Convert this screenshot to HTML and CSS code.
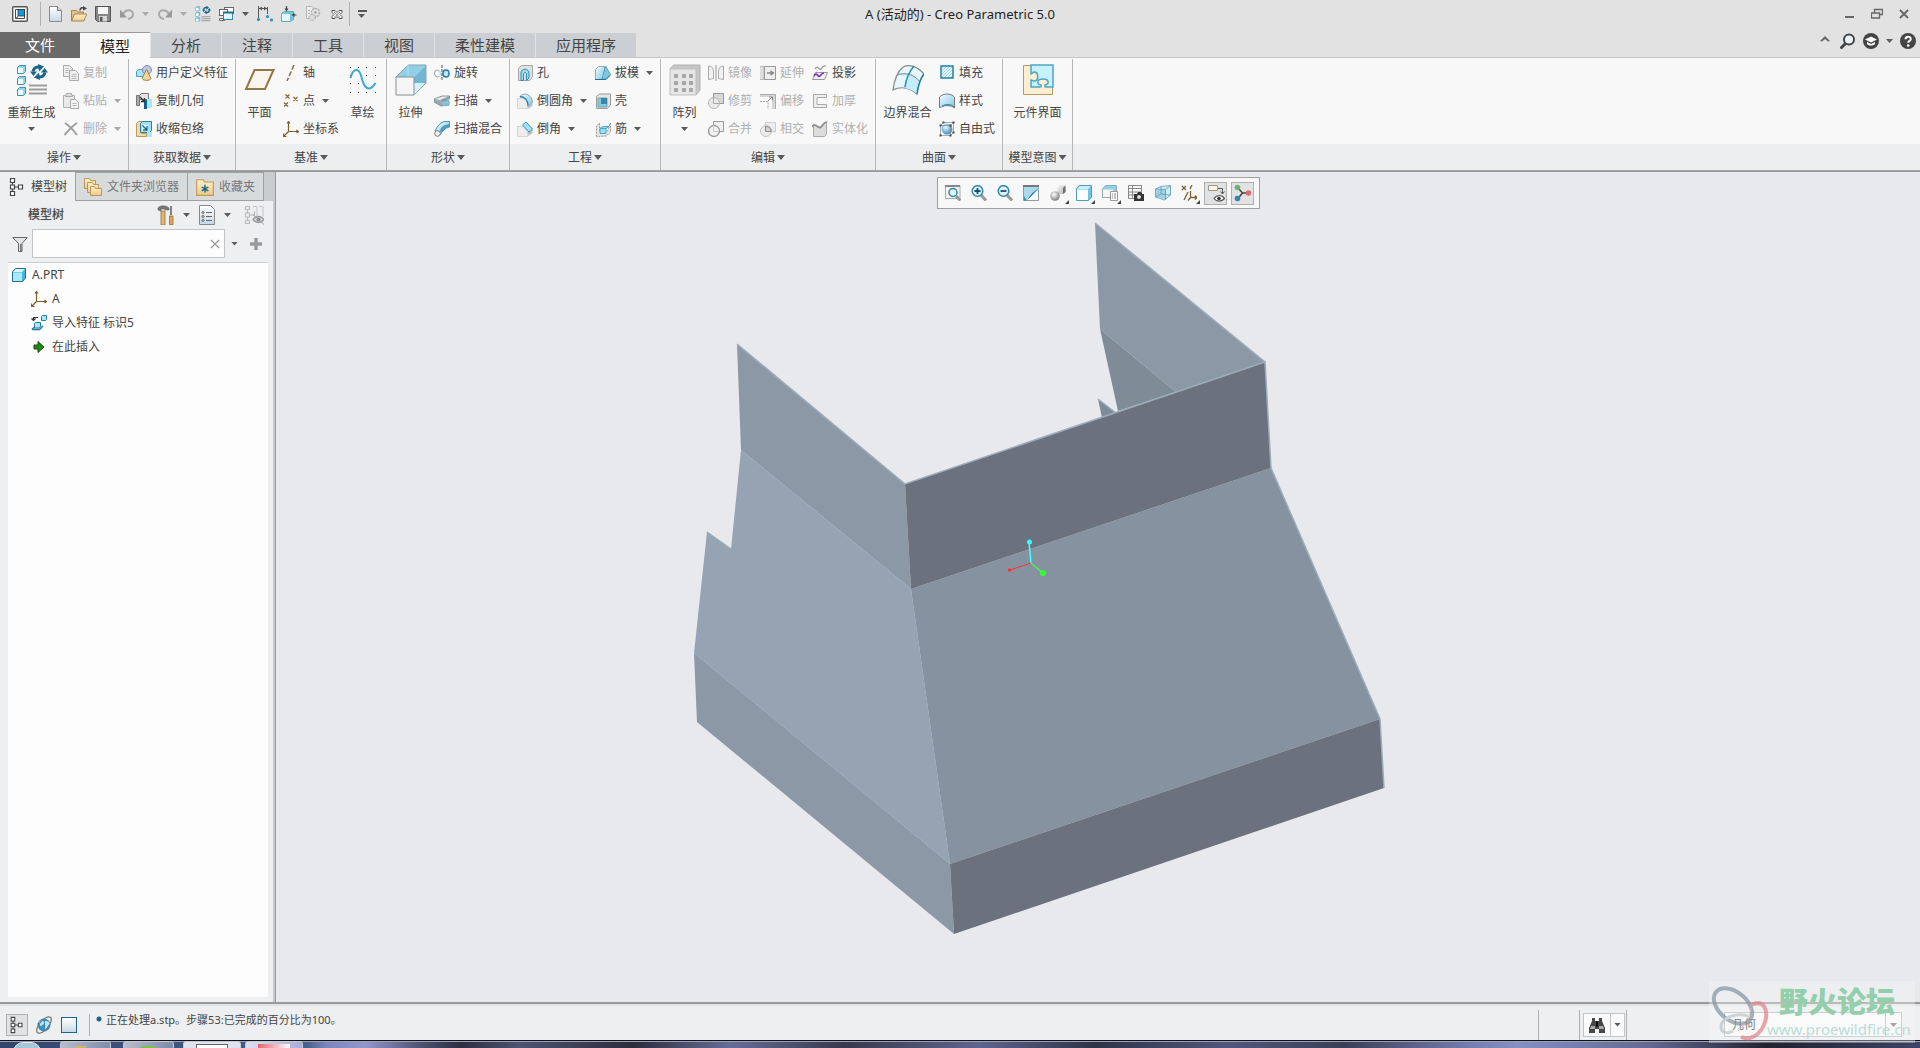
FILE: index.html
```html
<!DOCTYPE html>
<html lang="zh-CN">
<head>
<meta charset="utf-8">
<title>A (活动的) - Creo Parametric 5.0</title>
<link rel="stylesheet" href="styles.css">
</head>
<body>
<svg class="sprite" width="0" height="0" aria-hidden="true">
  <defs>
    <linearGradient id="g-ice" x1="0" y1="0" x2="1" y2="1"><stop offset="0" stop-color="#f4fcff"/><stop offset="1" stop-color="#7fc9e6"/></linearGradient>
    <linearGradient id="g-page" x1="0" y1="0" x2="0" y2="1"><stop offset="0" stop-color="#fff"/><stop offset="1" stop-color="#c5d9e4"/></linearGradient>
    <linearGradient id="g-gold" x1="0" y1="0" x2="0" y2="1"><stop offset="0" stop-color="#fff0cf"/><stop offset="1" stop-color="#ecc98b"/></linearGradient>
    <linearGradient id="g-grey" x1="0" y1="0" x2="1" y2="1"><stop offset="0" stop-color="#f4f4f4"/><stop offset="1" stop-color="#b4b4b4"/></linearGradient>
    <radialGradient id="g-ball" cx=".4" cy=".35" r=".7"><stop offset="0" stop-color="#fff"/><stop offset="1" stop-color="#757575"/></radialGradient>
    <radialGradient id="g-bluball" cx=".4" cy=".35" r=".7"><stop offset="0" stop-color="#e6f8ff"/><stop offset="1" stop-color="#2d8ab8"/></radialGradient>
    <pattern id="p-hatch" width="3" height="3" patternUnits="userSpaceOnUse"><path d="M0 3L3 0" stroke="#8fd0e8" stroke-width=".8"/></pattern>
  </defs>
  <symbol id="i-app" viewBox="0 0 16 16"><rect x=".7" y=".7" width="14.6" height="14.6" rx="1" fill="#fff" stroke="#555" stroke-width="1.4"/><path d="M3.500 3.500h9v9h-9z" fill="#fff" stroke="#4a4a4a"/><path d="M3.500 12.500l2.500-2" stroke="#4a4a4a"/><rect x="6" y="3.500" width="6.500" height="6.500" fill="#0a9be0" stroke="#333" stroke-width=".8"/></symbol>
  <symbol id="i-new" viewBox="0 0 16 16"><path d="M2.500 .5h8l4 4v11h-12z" fill="url(#g-page)" stroke="#8a8a8a"/><path d="M10.500 .5v4h4" fill="#ddd" stroke="#777"/></symbol>
  <symbol id="i-open" viewBox="0 0 16 16"><path d="M.5 15V4.500h5l1 1.500h6v4" fill="#e9c384" stroke="#a8824a"/><path d="M.5 15l3-7h12.300l-3 7z" fill="url(#g-gold)" stroke="#a8824a"/><path d="M9 4.500c0-3 2-3 4-2.500" fill="none" stroke="#444" stroke-width="1.500"/><path d="M12 0l4 2.500-4 2z" fill="#444"/></symbol>
  <symbol id="i-save" viewBox="0 0 16 16"><path d="M.5 .5h15v15H2.500l-2-2z" fill="#868686" stroke="#555"/><rect x="3" y="1" width="10" height="7" fill="#f5f5f5"/><rect x="4" y="10" width="8" height="5.500" fill="#d5d5d5"/><rect x="5" y="11" width="2.500" height="4.500" fill="#555"/></symbol>
  <symbol id="i-undo" viewBox="0 0 16 16"><path d="M4 8.500C6 3 14 3 14 8c0 3-2.500 4.500-5 5" fill="none" stroke="#a9a9a9" stroke-width="2"/><path d="M1 3.500v8h7z" fill="#9a9a9a"/></symbol>
  <symbol id="i-redo" viewBox="0 0 16 16"><path d="M12 8.500C10 3 2 3 2 8c0 3 2.500 4.500 5 5" fill="none" stroke="#a9a9a9" stroke-width="2"/><path d="M15 3.500v8H8z" fill="#9a9a9a"/></symbol>
  <symbol id="i-regen" viewBox="0 0 32 32"><g fill="#8fd6ef" stroke="#3f8fb3"><path d="M1.500 3.500l2-2h6v6l-2 2h-6z"/><path d="M1.500 14.500l2-2h6v6l-2 2h-6z"/><path d="M1.500 25.500l2-2h6v6l-2 2h-6z"/></g><g fill="#f3fcff"><path d="M2 4h5v5H2zM2 15h5v5H2zM2 26h5v5H2z"/></g><path d="M13 21.500h18M13 25.500h18M13 29.500h18" stroke="#9b9b9b" stroke-width="2"/><path d="M17 7.500c1-4.500 5-5.500 8-3.500M29 8.500c-1 4.500-5 5.500-8 3.500" fill="none" stroke="#1a648a" stroke-width="3"/><path d="M22 0l6 2.500-5 5zM24 16l-6-2.500 5-5zM14 7.500h7l-3.500 4.500zM32 8.500h-7l3.500-4.500z" fill="#1a648a"/></symbol>
  <symbol id="i-windows" viewBox="0 0 16 16"><g fill="#fff" stroke="#666"><rect x="5.500" y="1.500" width="9" height="6"/><rect x=".5" y="3.500" width="8" height="6"/><path d="M.5 12.500h5v2h-5z"/></g><rect x="4.500" y="6.500" width="9" height="7" fill="#e4f5fb" stroke="#2f8aae"/><path d="M4 6.500h10" stroke="#1f6f92" stroke-width="2"/></symbol>
  <symbol id="i-dims" viewBox="0 0 16 16"><path d="M1.500 0v12M10.500 1v7M1 2.500h9.500" fill="none" stroke="#555"/><path d="M2 2.500l3-2v4zM10 2.500l-3-2v4z" fill="#555"/><g fill="#2f93bf"><circle cx="1.500" cy="13.500" r="1.600"/><circle cx="10.500" cy="10.500" r="1.600"/><circle cx="14.500" cy="14" r="1.600"/></g></symbol>
  <symbol id="i-annot" viewBox="0 0 16 16"><path d="M.5 7.500l3-2h9v8l-3 2h-9z" fill="#6fc6e2" stroke="#5da9c6"/><path d="M1 8h8v7H1z" fill="#e5f8fe"/><path d="M5.500 0v4M15.500 9h-3" stroke="#444" stroke-width="1.200"/><path d="M3.500 2.500h4l-2 3zM13.500 7v4l-3-2z" fill="#444"/></symbol>
  <symbol id="i-gear" viewBox="0 0 16 16"><path d="M1.500 .5h6l3 3v9h-9z" fill="#eee" stroke="#b5b5b5"/><circle cx="10.500" cy="6.500" r="4" fill="#e5e5e5" stroke="#aaa" stroke-width="1.500" stroke-dasharray="2 1"/><circle cx="7" cy="11.500" r="3" fill="#ddd" stroke="#aaa" stroke-dasharray="2 1"/><path d="M3 4.500h2M3 7.500h2" stroke="#aaa"/><circle cx="10.500" cy="6.500" r="1.200" fill="#999"/></symbol>
  <symbol id="i-closewin" viewBox="0 0 16 16"><path d="M3 4.500h3l2 2 2-2h3v2l-2 2 2 2v2h-3l-2-2-2 2H3v-2l2-2-2-2z" fill="#fff" stroke="#555"/><path d="M5 6l6 5.500M11 6l-6 5.500" stroke="#666" stroke-width=".8"/></symbol>
  <symbol id="i-copy" viewBox="0 0 16 16"><g fill="#eee" stroke="#aaa"><path d="M.5 .5h6l3 3v8h-9z"/><path d="M6.500 5.500h6l3 3v7h-9z"/></g><path d="M2.500 3.500h3M2.500 5.500h3M2.500 7.500h3M8.500 9.500h5M8.500 11.500h5M8.500 13.500h5" stroke="#b8b8b8"/></symbol>
  <symbol id="i-paste" viewBox="0 0 16 16"><path d="M.5 2.500h11v12H.5z" fill="#e9e9e9" stroke="#b0b0b0"/><path d="M3.500 .5h5l1 3h-7z" fill="#ddd" stroke="#aaa"/><path d="M7.500 6.500h5l3 3v6h-8z" fill="#f4f4f4" stroke="#aaa"/><path d="M9.500 10.500h4M9.500 12.500h4" stroke="#b8b8b8"/></symbol>
  <symbol id="i-delete" viewBox="0 0 16 16"><path d="M2 2c5 3 9 8 12 12M14 2C9 5 5 10 1.500 14" fill="none" stroke="#9c9c9c" stroke-width="2"/></symbol>
  <symbol id="i-udf" viewBox="0 0 16 16"><path d="M.5 6.500l2-2h8v7H.5z" fill="#a9e3f7" stroke="#4a9fc0"/><circle cx="11" cy="5" r="4.500" fill="#b8c7e4" stroke="#7f8fb5"/><path d="M10.500 4.500l4.500 9c-1 2.500-7.500 2.500-9 0z" fill="#f1d49e" stroke="#a67d3c"/></symbol>
  <symbol id="i-copygeom" viewBox="0 0 16 16"><path d="M.5 2.500h3v10h-3z" fill="#aaa" stroke="#777"/><path d="M3.500 2.500l2-2h7v6h-9z" fill="#e5e5e5" stroke="#777"/><path d="M10 6h6v9h-6z" fill="#a8e6fb"/><path d="M8 8l3-2v10H8z" fill="#12618a"/><path d="M4 4l4 4M8.500 5v3.500H5" fill="none" stroke="#333" stroke-width="1.300"/></symbol>
  <symbol id="i-shrink" viewBox="0 0 16 16"><path d="M.5 2.500l2-2h5v4h-2v8h5v3H.5z" fill="#f3dba9" stroke="#c09a56"/><path d="M4.500 2.500l2-2h9v9l-2 2h-9z" fill="#a6e0f5" stroke="#2a7ea5"/><path d="M6 4h6v6H6z" fill="#e3f7fd"/><path d="M6.500 4.500l4 4M11 5v4H7" fill="none" stroke="#1a648a" stroke-width="1.300"/><path d="M11 11h5v5h-5z" fill="#a8e6fb"/></symbol>
  <symbol id="i-plane" viewBox="0 0 32 32"><path d="M10.500 6h19l-8.500 19h-19z" fill="#f9f5ec" stroke="#927644" stroke-width="2"/></symbol>
  <symbol id="i-axis" viewBox="0 0 16 16"><path d="M11 0L4 16" stroke="#8a6b3a" stroke-width="1.500" stroke-dasharray="5 2"/></symbol>
  <symbol id="i-point" viewBox="0 0 16 16"><path d="M2.500 1.500l4 4M6.500 1.500l-4 4M10.500 4l4 4M14.500 4l-4 4M1 9.500l4 4M5 9.500l-4 4" stroke="#8a6b3a" stroke-width="1.300"/></symbol>
  <symbol id="i-csys" viewBox="0 0 16 16"><path d="M5.500 0v10.500H16M5.500 10.500L1 15M4 2.500L5.500 .5 7 2.500M13.500 9l2 1.500-2 1.500M.5 12.500v3h3" fill="none" stroke="#7c6030" stroke-width="1.200"/></symbol>
  <symbol id="i-sketch" viewBox="0 0 32 32"><g fill="#444"><path d="M3 3h1v1H3zM11 3h1v1h-1zM19 3h1v1h-1zM28 3h1v1h-1zM3 11h1v1H3zM28 11h1v1h-1zM3 19h1v1H3zM11 19h1v1h-1zM28 19h1v1h-1zM3 28h1v1H3zM11 28h1v1h-1zM19 28h1v1h-1zM28 28h1v1h-1zM19 11h1v1h-1z"/></g><path d="M3.500 14C6 4 12 3 14.500 13c3 14 9 14 14 6" fill="none" stroke="#35a9d8" stroke-width="2"/></symbol>
  <symbol id="i-extrude" viewBox="0 0 32 32"><path d="M1 13L13 1h18L19 13z" fill="#8fcfe8"/><path d="M31 1v18L19 31V13z" fill="#d6f4fd"/><path d="M19 13L31 1v18H19z" fill="#73b6d2"/><path d="M1 13L13 1h18v18L19 31" fill="none" stroke="#8aa7b2"/><path d="M13 1v12h6" fill="none" stroke="#b9e2f1"/><path d="M1 13h18v18H1z" fill="#f5f5f5" stroke="#8c8c8c"/></symbol>
  <symbol id="i-revolve" viewBox="0 0 16 16"><ellipse cx="3.500" cy="8.500" rx="3" ry="3.500" fill="#fff" stroke="#999"/><path d="M4 5.500h8v6H4z" fill="#d4edf6" opacity=".7"/><ellipse cx="12" cy="8.500" rx="3" ry="3.500" fill="#b9e6f5" stroke="#287da2" stroke-width="1.500"/><path d="M8 0v16" stroke="#555" stroke-dasharray="3 1"/></symbol>
  <symbol id="i-sweep" viewBox="0 0 16 16"><path d="M0 6l8-3h7.500v3L8 7l7 1v4l-8 1-7-4z" fill="#9aaab2" stroke="#76868e" stroke-width=".8"/><path d="M1 6l8-2.500h5L6 7z" fill="#e9edef"/><path d="M8 9l7.500-2v4L9 13z" fill="#7cc5e0"/></symbol>
  <symbol id="i-blend" viewBox="0 0 16 16"><path d="M1 10C4 4 7 1 11 .5h4.500V6C11 7 8 10 6 14z" fill="url(#g-ice)" stroke="#3f93b5"/><path d="M6 9c2-4 4-5 9-6v3c-4 1-6 3-8 7z" fill="#4e9dbc"/><circle cx="3.500" cy="12.500" r="2.800" fill="#f4f4f4" stroke="#777"/></symbol>
  <symbol id="i-hole" viewBox="0 0 16 16"><path d="M1.500 3.500l3-3h11v11l-3 4h-11z" fill="#e0e0e0" stroke="#a5a5a5"/><path d="M4 15.500V8c0-5 8-5 8 0v5l-2.500 2.500V9c0-2-3-2-3 0v6.500z" fill="#9edcf1" stroke="#2d8db4"/></symbol>
  <symbol id="i-round" viewBox="0 0 16 16"><path d="M.5 5.500h4c4 0 6 3 6 6v4H.5z" fill="#ededed" stroke="#d5d5d5"/><path d="M10.500 12l5-3v4l-4 3z" fill="#c5c5c5"/><path d="M3 3.500C6-1 15 1 15.500 9l-4.500 4.500C11 7 7 4 3 4z" fill="url(#g-ice)" stroke="#8aa"/><path d="M3 3.500c5 0 8 4 8 9" fill="none" stroke="#2589b3" stroke-width="1.300"/></symbol>
  <symbol id="i-chamfer" viewBox="0 0 16 16"><path d="M.5 5.500h5l5 5v5H.5z" fill="#ededed" stroke="#d5d5d5"/><path d="M10.500 11l5-3v4l-4 3z" fill="#bdbdbd"/><path d="M5.500 4l3.500-3 6.500 7-3.500 3z" fill="#9ee2f8" stroke="#4196b7"/></symbol>
  <symbol id="i-draft" viewBox="0 0 16 16"><path d="M.5 4.500l3-3h6v9l-3 4h-6z" fill="url(#g-ice)" stroke="#a5a5a5"/><path d="M7 14L10.500 1l5 8.500L11 14z" fill="#7cc8e2" stroke="#5d9fb8"/><path d="M0 14.500h11l4-4" fill="none" stroke="#1f6f92"/></symbol>
  <symbol id="i-shell" viewBox="0 0 16 16"><path d="M1.500 3.500l3-2.500h11v11l-3 3.500h-11z" fill="#e6e6e6" stroke="#999"/><path d="M3 5h9v9H3z" fill="#8cc8dd" stroke="#6ba3b9"/><path d="M6 5h6v6H6z" fill="#3c86a5"/></symbol>
  <symbol id="i-rib" viewBox="0 0 16 16"><path d="M1.500 15.500V5l3-3v8h8l3-8v9l-4 4z" fill="#e6e6e6" stroke="#999" stroke-dasharray="2 1"/><path d="M5 7.500h6v5H5zM5 7.500l3-2h6l-3 2z" fill="#94e0f6" stroke="#4ba6c6"/></symbol>
  <symbol id="i-pattern" viewBox="0 0 32 32"><path d="M1 4.500L5 1h26v25l-4 5z" fill="#c6c6c6" stroke="#b0b0b0"/><path d="M1 5h26v26H1z" fill="#e6e6e6" stroke="#c0c0c0"/><path d="M5 10h4v4H5zM13 10h4v4h-4zM20 10h4v4h-4zM5 17h4v4H5zM13 17h4v4h-4zM20 17h4v4h-4zM5 24h4v4H5zM13 24h4v4h-4zM20 24h4v4h-4z" fill="#a8a8a8"/></symbol>
  <symbol id="i-mirror" viewBox="0 0 16 16"><path d="M.5 1c4 0 5 3 5 6v6.500l-5 1zM15.500 1c-4 0-5 3-5 6v6.500l5 1z" fill="#f2f2f2" stroke="#aaa"/><path d="M8 0v16" stroke="#999"/></symbol>
  <symbol id="i-trim" viewBox="0 0 16 16"><rect x="5.500" y=".5" width="10" height="10" fill="#d8d8d8" stroke="#999"/><circle cx="6" cy="10" r="5.500" fill="#e9e9e9" stroke="#b5b5b5"/><path d="M5.500 4.500v6H11" fill="none" stroke="#aaa"/></symbol>
  <symbol id="i-merge" viewBox="0 0 16 16"><path d="M5.500 4.500v-4h10v10h-4.500" fill="#f1f1f1" stroke="#999"/><circle cx="6" cy="10" r="5.500" fill="#f1f1f1" stroke="#999" stroke-width="1.300"/><path d="M5.500 4.500v6H11" fill="none" stroke="#ccc"/></symbol>
  <symbol id="i-extend" viewBox="0 0 16 16"><path d="M0 1.500h4v13H0" fill="#ddd" stroke="#bbb"/><path d="M4.500 1.500h11v13h-11z" fill="#eee" stroke="#999"/><path d="M7 8h5" stroke="#888" stroke-width="1.500"/><path d="M10.500 5l4 3-4 3z" fill="#888"/></symbol>
  <symbol id="i-offset" viewBox="0 0 16 16"><path d="M0 1.500h15.500V16" fill="none" stroke="#aaa"/><path d="M0 4h12v12h3V2H0z" fill="#d5d5d5"/><path d="M0 8.500h8V16" fill="none" stroke="#aaa" stroke-dasharray="2 1"/><path d="M8 8l4-4M9 4h3.500v3.500" stroke="#888" fill="none"/></symbol>
  <symbol id="i-intersect" viewBox="0 0 16 16"><rect x="5.500" y="1.500" width="10" height="9" fill="#ececec" stroke="#ccc"/><circle cx="6" cy="10" r="5.500" fill="#ececec" stroke="#c2c2c2"/><path d="M5.500 5.500c4 0 5.500 2 5.500 5H5.500z" fill="#d4d4d4" stroke="#888"/></symbol>
  <symbol id="i-project" viewBox="0 0 16 16"><path d="M3 4c3-5 4 2 6 0s2-4 5-3" fill="none" stroke="#999" stroke-width="1.300"/><path d="M.5 14.500l3-7h12l-3 7z" fill="#f1f1f1" stroke="#999"/><path d="M2 11c3-5 4 2 6 0s2-3 4-3" fill="none" stroke="#7a35b8" stroke-width="1.700"/></symbol>
  <symbol id="i-thicken" viewBox="0 0 16 16"><path d="M14.500 1.500H1.500v13h13v-3h-9.500v-7h9.500z" fill="#eee" stroke="#aaa"/></symbol>
  <symbol id="i-solidify" viewBox="0 0 16 16"><path d="M1.500 15.500V6c3-5 5 3 8 0s2-5 5-5V13l-2 2.500z" fill="#dcdcdc" stroke="#aaa"/><path d="M0 6c3-6 6 3 9 0s2-4 6-5" fill="none" stroke="#909090" stroke-width="1.800"/></symbol>
  <symbol id="i-boundary" viewBox="0 0 32 32"><path d="M11 3C17 0 25 2 32 10c-4 5-6 12-7 20C18 24 9 22 1 26 2 18 5 8 11 3z" fill="#e6f8fd" stroke="#8a8a8a" stroke-width="1.300"/><path d="M4 11c8-4 17-1 24 6l-3 13c-3-3-7-5-12-6 1-5 2-8 4-12z" fill="#c3edfa"/><path d="M5 11c8-3 17-1 23 7" fill="none" stroke="#888"/><path d="M22 2c-5 6-8 13-9 21" fill="none" stroke="#2d8db4" stroke-width="1.500"/><path d="M32 10c-4 5-6 12-7 20" fill="none" stroke="#247ca2" stroke-width="1.500"/></symbol>
  <symbol id="i-fill" viewBox="0 0 16 16"><path d="M2 1h12v12H2z" fill="#dff5fc"/><path d="M2 1h12v12H2z" fill="url(#p-hatch)" stroke="#2480a6" stroke-width="1.500"/></symbol>
  <symbol id="i-style" viewBox="0 0 16 16"><path d="M.5 4c4-4 11-4 15 0v11c-3-3-10-3-13-1C2 14 1 14 .5 15z" fill="url(#g-ice)" stroke="#777"/><path d="M3 13c4-2 9-2 12 1" fill="none" stroke="#247ca2"/></symbol>
  <symbol id="i-freeform" viewBox="0 0 16 16"><circle cx="8" cy="8" r="5.500" fill="url(#g-bluball)"/><path d="M1.500 4.500h10v10h-10zM4.500 1.500h10v10M1.500 4.500l3-3M11.500 4.500l3-3M11.500 14.500l3-3" fill="none" stroke="#777" stroke-width=".6"/><path d="M.5 3.500h2v2h-2zM10.500 3.500h2v2h-2zM.5 13.500h2v2h-2zM10.500 13.500h2v2h-2zM3.500 .5h2v2h-2zM13.500 .5h2v2h-2zM13.500 10.500h2v2h-2z" fill="#444"/></symbol>
  <symbol id="i-interface" viewBox="0 0 32 32"><path d="M1.500 1.500h29v29h-29z" fill="#ffeed2" stroke="#b8995e"/><path d="M9 1h22v22h-7c-2 0-1-1-1-2 5-1 4-6-2-6s-7 5-2 6c0 1 1 2-1 2H9v-7c2 0 1 1 3 1 5 0 5-9 0-9-2 0-1 2-3 2z" fill="#c9f1fc" stroke="#4ba6c6" stroke-width="1.500"/></symbol>
  <symbol id="i-tree" viewBox="0 0 16 20"><path d="M1.500 1.500h4v4h-4zM1.500 8h4v4h-4zM1.500 14.500h4v4h-4zM9.500 8h4v4h-4zM3.500 5.500V8M3.500 12v2.500M5.500 10h4" fill="#fff" stroke="#444" stroke-width="1.200"/></symbol>
  <symbol id="i-folders" viewBox="0 0 20 20"><g fill="url(#g-gold)" stroke="#bb9656"><path d="M1.500 1.500h5l1 2h5v8h-11z"/><path d="M4.500 5.500h5l1 2h5v8h-11z"/><path d="M7.500 9.500h4l1 2h6v7h-11z"/></g></symbol>
  <symbol id="i-fav" viewBox="0 0 18 18"><path d="M1.500 2.500h6l1 2h8v12h-15z" fill="url(#g-gold)" stroke="#c09a56"/><path d="M9 7v7M6 9l6 3.500M12 9l-6 3.500" stroke="#176286" stroke-width="1.300"/></symbol>
  <symbol id="i-hammer" viewBox="0 0 18 20"><path d="M1 3c2-3 8-3 11 0v2H8V4H4v2L1 5z" fill="#777" stroke="#555" stroke-width=".5"/><path d="M4 6h4v14H4z" fill="#dfb778" stroke="#946c34" stroke-width=".8"/><path d="M14 1v9" stroke="#777" stroke-width="1.800"/><path d="M12.500 11h3.500v8.500h-3.500z" fill="#dfa762" stroke="#946c34" stroke-width=".8"/></symbol>
  <symbol id="i-list" viewBox="0 0 16 20"><path d="M.5 .5h11l4 4v15H.5z" fill="url(#g-page)" stroke="#888"/><path d="M7 7.500h6M7 11.500h6M7 15.500h6" stroke="#666"/><g fill="#fff" stroke="#555"><circle cx="4" cy="7.500" r="1"/><circle cx="4" cy="11.500" r="1"/><circle cx="4" cy="15.500" r="1"/></g></symbol>
  <symbol id="i-treeoff" viewBox="0 0 20 20"><path d="M1.500 1.500h4v3h-4zM1.500 8h4v4h-4zM1.500 15.500h4v3h-4zM3.500 5v3M3.500 12v3.500M5.500 10h5V6" fill="none" stroke="#bbb" stroke-width="1.200"/><path d="M9 1.500h4v10M15 1.500h4v10" fill="none" stroke="#c5c5c5"/><path d="M9 14.500c3-4 8-4 11 0-3 4-8 4-11 0z" fill="#ddd" stroke="#999" stroke-width="1.300"/><circle cx="14.500" cy="14.500" r="2" fill="#888"/><path d="M9 9.500l11 10" stroke="#999"/></symbol>
  <symbol id="i-funnel" viewBox="0 0 16 16"><path d="M.7 1.500h14.600L10 7.500v8H6.500v-8z" fill="#e4e4e4" stroke="#666"/><path d="M8 8h1.500v7H8z" fill="#777"/></symbol>
  <symbol id="i-part" viewBox="0 0 14 14"><path d="M.5 4l3-3.500h10V10l-3 3.500H.5z" fill="#45b5de" stroke="#1f6f92"/><path d="M1 4.500h9V13H1z" fill="#a8e8fc"/><path d="M1 4l3-3h9l-3 3z" fill="#d8f6ff"/></symbol>
  <symbol id="i-import" viewBox="0 0 16 16"><path d="M10.500 1.500l1-1h4v4l-1 1h-4z" fill="#a8e6fb" stroke="#247ca2"/><path d="M3.500 8.500l1-1h5v4l-1 1.500h-5z" fill="#a8e6fb" stroke="#247ca2"/><path d="M1 14.500h7.500l3.500-3.500M1 14.500l2-2" fill="none" stroke="#247ca2" stroke-width="1.500"/><path d="M2.500 5V2.500H7M.5 3.500l2 2 2-2" fill="none" stroke="#333" stroke-width="1.200"/></symbol>
  <symbol id="i-insert" viewBox="0 0 16 16"><path d="M3 6h4V2.500L13 8l-6 5.500V10H3z" fill="#1b8d0e" stroke="#23421c"/></symbol>
  <symbol id="i-refit" viewBox="0 0 16 16"><path d="M.5 .5h14.500v13H.5z" fill="#f3f3f3" stroke="#aaa"/><path d="M0 1h15" stroke="#888" stroke-width="2"/><path d="M11 11l4.500 4.500" stroke="#999" stroke-width="3"/><circle cx="8" cy="7.500" r="4" fill="#e3f6fd" stroke="#2c87ae" stroke-width="1.500"/></symbol>
  <symbol id="i-zoomin" viewBox="0 0 16 16"><path d="M9.500 9.500l5.500 6" stroke="#999" stroke-width="3"/><circle cx="6.500" cy="6" r="5.300" fill="#e3f6fd" stroke="#2c87ae" stroke-width="1.500"/><path d="M3.500 6h6M6.500 3v6" stroke="#164f6e" stroke-width="1.800"/></symbol>
  <symbol id="i-zoomout" viewBox="0 0 16 16"><path d="M9.500 9.500l5.500 6" stroke="#999" stroke-width="3"/><circle cx="6.500" cy="6" r="5.300" fill="#e3f6fd" stroke="#2c87ae" stroke-width="1.500"/><path d="M3.500 6h6" stroke="#164f6e" stroke-width="1.800"/></symbol>
  <symbol id="i-repaint" viewBox="0 0 16 16"><path d="M.5 .5h15v15H.5z" fill="#f5fbfd" stroke="#8a9aa2"/><path d="M1 2h14.500v3C11 6 7 9 4 15.500L1 11z" fill="#a9d9ec"/><path d="M0 1h16" stroke="#777" stroke-width="2"/><path d="M15.500 3.500C11 6 7 10 4 15l4-3.500z" fill="#1b7298"/><path d="M1 11l3 4.500H1z" fill="#3d91b5"/></symbol>
  <symbol id="i-shading" viewBox="0 0 16 16"><path d="M7 3l3-2.500h5.500V7L13 9H7z" fill="url(#g-grey)"/><path d="M13 3v6l2.500-2V.5z" fill="#6d6d6d"/><circle cx="5" cy="11" r="4.800" fill="url(#g-ball)"/></symbol>
  <symbol id="i-display" viewBox="0 0 16 16"><path d="M.5 4l3-3.500h12V12l-3 3.500H.5z" fill="#6ec4e2" stroke="#4e9db9"/><path d="M1 4.500h11V15H1z" fill="#fbfeff"/><path d="M1 4l3-3h11l-3 3z" fill="#c7f0fc"/></symbol>
  <symbol id="i-views" viewBox="0 0 16 16"><path d="M.5 4l3-3.500h11V10l-3 2.500H.5z" fill="#8ed2ea" stroke="#98a7ae"/><path d="M1 4.500h10V12H1z" fill="#f4f4f4"/><path d="M8.500 6.500h7v9h-7z" fill="#fff" stroke="#999"/><path d="M10 9h1M12 9h2M10 11h1M12 11h2M10 13h1M12 13h2" stroke="#666" stroke-width=".8"/></symbol>
  <symbol id="i-camera" viewBox="0 0 16 16"><path d="M.5 .5h13v13H.5zM.5 3.500h13M.5 7h13M.5 10h13M4.500 .5v13" fill="#f8f8f8" stroke="#888"/><path d="M6 9h3l1-2h3l1 2h2v7H6z" fill="#333"/><circle cx="11" cy="12" r="2" fill="#ddd"/></symbol>
  <symbol id="i-persp" viewBox="0 0 16 16"><path d="M.5 4L6 1.500 15.500 .5V10l-6 5L.5 12z" fill="#d3ebf5" stroke="#6fafc9"/><path d="M.5 4l10 .5 5-4M10.500 4.500v10.500M6 1.500V9l9.500 1M6 9L.5 12" fill="none" stroke="#4f9ab8" stroke-width=".8"/><path d="M1 4.500h9V14l-9-2z" fill="#5ba7c7" opacity=".4"/></symbol>
  <symbol id="i-datum" viewBox="0 0 16 16"><path d="M1 1l4 4M5 1L1 5M11 0L9 4M7 7l-4 8M9.500 6v6.500H16M9.500 12.500l-2.500 3M14 10.500l2 2-2 2" fill="none" stroke="#7c6030" stroke-width="1.300"/></symbol>
  <symbol id="i-annotdisp" viewBox="0 0 18 18"><path d="M1.500 1.500h9v5h-9z" fill="#fff6d8" stroke="#999"/><path d="M11 4.500h4.500v5M13.500 7.500l2 2.500 2-2.500" fill="none" stroke="#555"/><path d="M7 14.500c3-4 8-4 10.500 0-3 3.500-8 3.500-10.500 0z" fill="#fff" stroke="#555" stroke-width="1.200"/><circle cx="12" cy="14.500" r="1.800" fill="#333"/></symbol>
  <symbol id="i-spin" viewBox="0 0 18 18"><path d="M4 4l4.500 5H14M8.500 9L4 14.500" fill="none" stroke="#444" stroke-width="1.500"/><circle cx="3.500" cy="3.500" r="2.800" fill="#6fae74"/><circle cx="14.500" cy="9" r="2.800" fill="#e0696c"/><circle cx="3.500" cy="14.500" r="2.800" fill="#3a82ad"/></symbol>
  <symbol id="i-globe" viewBox="0 0 18 18"><circle cx="9" cy="9" r="6.500" fill="#348fc4"/><path d="M4 6c3-3 5-1 5 1s-3 2-3 4M10 5c3 0 5 1 5 4-2 0-3 3-4 5-2-2 0-4-1-5z" fill="#bfe6f6"/><ellipse cx="9" cy="9" rx="10" ry="4.500" transform="rotate(-50 9 9)" fill="none" stroke="#777" stroke-width="1.300"/></symbol>
  <symbol id="i-binoc" viewBox="0 0 16 16"><path d="M3 1h3v3h4V1h3v3l3 7v5h-6v-4H6v4H0v-5l3-7z" fill="#484848"/><path d="M2 9h4v3H1zM10 9h4l1 3h-5z" fill="#aaa"/><path d="M7 4h2v6H7z" fill="#111"/></symbol>
  <symbol id="i-search" viewBox="0 0 16 16"><path d="M5 11l-3.500 3.500" stroke="#444" stroke-width="3" stroke-linecap="round"/><circle cx="9" cy="6.500" r="5" fill="#eef5fa" stroke="#444" stroke-width="2"/></symbol>
  <symbol id="i-learn" viewBox="0 0 16 16"><circle cx="8" cy="8" r="8" fill="#444"/><path d="M8 3.500l6 3-6 3-6-3z" fill="#fff"/><path d="M4 9v2c2 2 6 2 8 0V9l-4 2z" fill="#fff"/></symbol>
  <symbol id="i-help" viewBox="0 0 16 16"><circle cx="8" cy="8" r="8" fill="#444"/><path d="M5.500 6.300c0-3.500 5.300-3.300 5.300-.3 0 2-2.600 1.800-2.600 3.800" fill="none" stroke="#fff" stroke-width="2"/><circle cx="8.200" cy="12.500" r="1.300" fill="#fff"/></symbol>
  <symbol id="i-caret" viewBox="0 0 16 16"><path d="M3 8l5-5 5 5-2 .5-3-2.500-3 2.500z" fill="#666"/></symbol>
  <symbol id="i-min" viewBox="0 0 12 12"><path d="M1 9h9" stroke="#666" stroke-width="2"/></symbol>
  <symbol id="i-restore" viewBox="0 0 12 12"><path d="M3.500 4.500v-3h8v5h-3M.5 5h8v5h-8z" fill="none" stroke="#666" stroke-width="1.300"/></symbol>
  <symbol id="i-close" viewBox="0 0 12 12"><path d="M2 2l8 8M10 2l-8 8" stroke="#666" stroke-width="1.800"/></symbol>
</svg>

<header class="titlebar">
  <div class="quick">
    <button class="tool" aria-label="应用程序菜单"><svg><use href="#i-app"/></svg></button>
    <span class="rule"></span>
    <button class="tool" aria-label="新建"><svg><use href="#i-new"/></svg></button>
    <button class="tool" aria-label="打开"><svg><use href="#i-open"/></svg></button>
    <button class="tool" aria-label="保存"><svg><use href="#i-save"/></svg></button>
    <button class="tool" aria-label="撤消"><svg><use href="#i-undo"/></svg></button>
    <button class="drop faded" aria-label="撤消列表"></button>
    <button class="tool" aria-label="重做"><svg><use href="#i-redo"/></svg></button>
    <button class="drop faded" aria-label="重做列表"></button>
    <button class="tool" aria-label="重新生成"><svg><use href="#i-regen"/></svg></button>
    <button class="tool" aria-label="窗口"><svg><use href="#i-windows"/></svg></button>
    <button class="drop" aria-label="窗口列表"></button>
    <button class="tool" aria-label="尺寸"><svg><use href="#i-dims"/></svg></button>
    <button class="tool" aria-label="注释平面"><svg><use href="#i-annot"/></svg></button>
    <button class="tool" aria-label="设置"><svg><use href="#i-gear"/></svg></button>
    <button class="tool" aria-label="关闭"><svg><use href="#i-closewin"/></svg></button>
    <span class="rule snug"></span>
    <button class="drop lined" aria-label="自定义快速访问工具栏"></button>
  </div>
  <h1 class="title">A (活动的) - Creo Parametric 5.0</h1>
  <div class="window-buttons">
    <button aria-label="最小化"><svg><use href="#i-min"/></svg></button>
    <button aria-label="还原"><svg><use href="#i-restore"/></svg></button>
    <button aria-label="关闭窗口"><svg><use href="#i-close"/></svg></button>
  </div>
</header>

<nav class="tabs">
  <button class="tab file">文件</button>
  <button class="tab active">模型</button>
  <button class="tab">分析</button>
  <button class="tab">注释</button>
  <button class="tab">工具</button>
  <button class="tab">视图</button>
  <button class="tab">柔性建模</button>
  <button class="tab">应用程序</button>
  <div class="help">
    <button class="tool" aria-label="收起功能区"><svg><use href="#i-caret"/></svg></button>
    <button class="tool" aria-label="搜索"><svg><use href="#i-search"/></svg></button>
    <button class="tool" aria-label="学习"><svg><use href="#i-learn"/></svg></button>
    <button class="drop" aria-label="学习列表"></button>
    <button class="tool" aria-label="帮助"><svg><use href="#i-help"/></svg></button>
  </div>
</nav>

<section class="ribbon">
  <div class="group">
    <div class="body">
      <button class="big wide"><svg><use href="#i-regen"/></svg><span>重新生成</span><i class="arrow"></i></button>
      <div class="col c-first">
        <button class="cmd" disabled><svg><use href="#i-copy"/></svg>复制</button>
        <button class="cmd" disabled><svg><use href="#i-paste"/></svg>粘贴<i class="arrow"></i></button>
        <button class="cmd" disabled><svg><use href="#i-delete"/></svg>删除<i class="arrow"></i></button>
      </div>
    </div>
    <button class="caption">操作<i class="arrow"></i></button>
  </div>
  <div class="group">
    <div class="body lead">
      <div class="col c-data">
        <button class="cmd"><svg><use href="#i-udf"/></svg>用户定义特征</button>
        <button class="cmd"><svg><use href="#i-copygeom"/></svg>复制几何</button>
        <button class="cmd"><svg><use href="#i-shrink"/></svg>收缩包络</button>
      </div>
    </div>
    <button class="caption">获取数据<i class="arrow"></i></button>
  </div>
  <div class="group">
    <div class="body">
      <button class="big"><svg><use href="#i-plane"/></svg><span>平面</span></button>
      <div class="col c-datum">
        <button class="cmd"><svg><use href="#i-axis"/></svg>轴</button>
        <button class="cmd"><svg><use href="#i-point"/></svg>点<i class="arrow"></i></button>
        <button class="cmd"><svg><use href="#i-csys"/></svg>坐标系</button>
      </div>
      <button class="big"><svg><use href="#i-sketch"/></svg><span>草绘</span></button>
    </div>
    <button class="caption">基准<i class="arrow"></i></button>
  </div>
  <div class="group">
    <div class="body">
      <button class="big"><svg><use href="#i-extrude"/></svg><span>拉伸</span></button>
      <div class="col c-shape">
        <button class="cmd"><svg><use href="#i-revolve"/></svg>旋转</button>
        <button class="cmd"><svg><use href="#i-sweep"/></svg>扫描<i class="arrow"></i></button>
        <button class="cmd"><svg><use href="#i-blend"/></svg>扫描混合</button>
      </div>
    </div>
    <button class="caption">形状<i class="arrow"></i></button>
  </div>
  <div class="group">
    <div class="body lead">
      <div class="col c-eng">
        <button class="cmd"><svg><use href="#i-hole"/></svg>孔</button>
        <button class="cmd"><svg><use href="#i-round"/></svg>倒圆角<i class="arrow"></i></button>
        <button class="cmd"><svg><use href="#i-chamfer"/></svg>倒角<i class="arrow"></i></button>
      </div>
      <div class="col c-first">
        <button class="cmd"><svg><use href="#i-draft"/></svg>拔模<i class="arrow"></i></button>
        <button class="cmd"><svg><use href="#i-shell"/></svg>壳</button>
        <button class="cmd"><svg><use href="#i-rib"/></svg>筋<i class="arrow"></i></button>
      </div>
    </div>
    <button class="caption">工程<i class="arrow"></i></button>
  </div>
  <div class="group">
    <div class="body">
      <button class="big"><svg><use href="#i-pattern"/></svg><span>阵列</span><i class="arrow"></i></button>
      <div class="col c-edit">
        <button class="cmd" disabled><svg><use href="#i-mirror"/></svg>镜像</button>
        <button class="cmd" disabled><svg><use href="#i-trim"/></svg>修剪</button>
        <button class="cmd" disabled><svg><use href="#i-merge"/></svg>合并</button>
      </div>
      <div class="col c-edit">
        <button class="cmd" disabled><svg><use href="#i-extend"/></svg>延伸</button>
        <button class="cmd" disabled><svg><use href="#i-offset"/></svg>偏移</button>
        <button class="cmd" disabled><svg><use href="#i-intersect"/></svg>相交</button>
      </div>
      <div class="col c-last">
        <button class="cmd"><svg><use href="#i-project"/></svg>投影</button>
        <button class="cmd" disabled><svg><use href="#i-thicken"/></svg>加厚</button>
        <button class="cmd" disabled><svg><use href="#i-solidify"/></svg>实体化</button>
      </div>
    </div>
    <button class="caption">编辑<i class="arrow"></i></button>
  </div>
  <div class="group">
    <div class="body">
      <button class="big wide"><svg><use href="#i-boundary"/></svg><span>边界混合</span></button>
      <div class="col c-last">
        <button class="cmd"><svg><use href="#i-fill"/></svg>填充</button>
        <button class="cmd"><svg><use href="#i-style"/></svg>样式</button>
        <button class="cmd"><svg><use href="#i-freeform"/></svg>自由式</button>
      </div>
    </div>
    <button class="caption">曲面<i class="arrow"></i></button>
  </div>
  <div class="group">
    <div class="body">
      <button class="big widest"><svg><use href="#i-interface"/></svg><span>元件界面</span></button>
    </div>
    <button class="caption">模型意图<i class="arrow"></i></button>
  </div>
</section>

<main class="workspace">
  <aside class="panel">
    <div class="navigator">
      <div class="nav-tabs">
        <button class="nav-tab current"><svg><use href="#i-tree"/></svg>模型树</button>
        <button class="nav-tab"><svg><use href="#i-folders"/></svg>文件夹浏览器</button>
        <button class="nav-tab"><svg><use href="#i-fav"/></svg>收藏夹</button>
      </div>
      <div class="tree-tools">
        <h2>模型树</h2>
        <button class="tool tall" aria-label="设置"><svg><use href="#i-hammer"/></svg></button>
        <button class="drop" aria-label="设置列表"></button>
        <button class="tool tall" aria-label="显示"><svg><use href="#i-list"/></svg></button>
        <button class="drop" aria-label="显示列表"></button>
        <button class="tool tall" aria-label="隐藏项"><svg><use href="#i-treeoff"/></svg></button>
      </div>
      <div class="filter">
        <svg class="funnel"><use href="#i-funnel"/></svg>
        <div class="field">
          <input type="text" aria-label="过滤模型树">
          <button class="tool" aria-label="清除"><svg viewBox="0 0 16 16"><path d="M4 4l8 8M12 4l-8 8" stroke="#999" stroke-width="1.300"/></svg></button>
        </div>
        <button class="drop" aria-label="过滤列表"></button>
        <button class="tool" aria-label="添加"><svg viewBox="0 0 16 16"><path d="M8 2v12M2 8h12" stroke="#999" stroke-width="3.500"/></svg></button>
      </div>
      <ul class="tree">
        <li><svg><use href="#i-part"/></svg>A.PRT
          <ul>
            <li><svg><use href="#i-csys"/></svg>A</li>
            <li><svg><use href="#i-import"/></svg>导入特征 标识5</li>
            <li><svg><use href="#i-insert"/></svg>在此插入</li>
          </ul>
        </li>
      </ul>
    </div>
    <div class="sash"></div>
  </aside>

  <section class="canvas">
    <svg class="model" viewBox="276 172 1644 830" role="img" aria-label="A.PRT">
      <path d="M1100 329L1176 392 1118 411z" fill="#7f8b97"/>
      <path d="M1095 223L1265 362 1176 392 1100 329z" fill="#8c98a6"/>
      <path d="M1098 399L1116 413 1102 418z" fill="#7f8b97"/>
      <path d="M737 344L905 484 911 589 741 450z" fill="#8c98a6"/>
      <path d="M741 450L911 589 950 864 694 653 707 532 731 549z" fill="#96a3b3"/>
      <path d="M694 653L950 864 954 934 697 722z" fill="#8c98a6"/>
      <path d="M911 589L1271 468 1380 719 950 864z" fill="#8692a0"/>
      <path d="M905 484L1265 362 1271 468 911 589z" fill="#6b727e"/>
      <path d="M950 864L1380 719 1384 788 954 934z" fill="#6b727e"/>
      <path d="M737 344L905 484 1265 362 1095 223M707 532L731 549M1098 399L1116 413M1265 362L1271 468 1380 719 1384 788" fill="none" stroke="#9dacba" stroke-width="1.500"/>
      <path d="M1031 563L1029 542" stroke="#4ff" stroke-width="1.500"/>
      <path d="M1031 563L1010 570" stroke="#f33"/>
      <path d="M1031 563L1043 573" stroke="#5e5" stroke-width="1.500"/>
      <circle cx="1029.500" cy="542" r="2.500" fill="#3ff"/>
      <circle cx="1009.500" cy="570" r="1.800" fill="#f33"/>
      <circle cx="1043" cy="573" r="3" fill="#3f3"/>
    </svg>
    <div class="view-tools">
      <button class="tool" aria-label="重新调整"><svg><use href="#i-refit"/></svg></button>
      <button class="tool" aria-label="放大"><svg><use href="#i-zoomin"/></svg></button>
      <button class="tool" aria-label="缩小"><svg><use href="#i-zoomout"/></svg></button>
      <button class="tool" aria-label="重画"><svg><use href="#i-repaint"/></svg></button>
      <button class="tool more" aria-label="渲染"><svg><use href="#i-shading"/></svg></button>
      <button class="tool more" aria-label="显示样式"><svg><use href="#i-display"/></svg></button>
      <button class="tool more" aria-label="已保存方向"><svg><use href="#i-views"/></svg></button>
      <button class="tool" aria-label="视图管理器"><svg><use href="#i-camera"/></svg></button>
      <button class="tool" aria-label="透视图"><svg><use href="#i-persp"/></svg></button>
      <button class="tool more" aria-label="基准显示"><svg><use href="#i-datum"/></svg></button>
      <button class="tool pressed" aria-label="注释显示" aria-pressed="true"><svg><use href="#i-annotdisp"/></svg></button>
      <button class="tool pressed" aria-label="旋转中心" aria-pressed="true"><svg><use href="#i-spin"/></svg></button>
    </div>
  </section>
</main>

<footer class="status">
  <button class="tool pressed" aria-label="导航器" aria-pressed="true"><svg><use href="#i-tree"/></svg></button>
  <button class="tool" aria-label="浏览器"><svg><use href="#i-globe"/></svg></button>
  <button class="tool blank" aria-label="全屏"></button>
  <p class="message">正在处理a.stp。步骤53:已完成的百分比为100。</p>
  <span class="cell"></span>
  <div class="find">
    <button class="tool" aria-label="查找"><svg><use href="#i-binoc"/></svg></button>
    <button class="drop" aria-label="查找列表"></button>
  </div>
  <div class="picker">
    <select aria-label="选择过滤器"><option>几何</option></select>
  </div>
  <div class="watermark">
    <svg viewBox="0 0 60 58"><g fill="none"><ellipse cx="23" cy="23" rx="22" ry="14" transform="rotate(40 23 23)" stroke="#7f93a5" stroke-width="4"/><path d="M38 33c-12-4-27 2-27 11 0 6 7 7 12 4" stroke="#b8c4cc" stroke-width="3"/><path d="M41 22c12-6 18 4 14 17-4 13-15 19-24 15" stroke="#e08088" stroke-width="4"/><path d="M41 25c-1 9-6 17-13 23" stroke="#e5a0a5" stroke-width="1"/></g></svg>
    <p class="mark-name">野火论坛</p>
    <p class="mark-url">www.proewildfire.cn</p>
  </div>
</footer>

<div class="taskbar">
  <span class="start"></span>
  <span class="task"><b class="gold"></b></span>
  <span class="task shifted"><b class="green"></b></span>
  <span class="task light"><b class="white"></b></span>
  <span class="task pale"><b class="red"></b></span>
</div>
</body>
</html>
```
FILE: styles.css
```css
* { box-sizing: border-box; }

body {
  margin: 0;
  height: 100vh;
  display: flex;
  flex-direction: column;
  overflow: hidden;
  background: #e2e2e2;
  color: #444;
  font: 12px/18px "Noto Sans", "Noto Sans CJK SC", sans-serif;
}

button, input, select { font: inherit; color: inherit; }
button { border: 0; padding: 0; background: none; white-space: nowrap; }
h1, h2, p, ul { margin: 0; padding: 0; font-weight: normal; }
svg { display: block; flex: none; }
.sprite { position: absolute; }

/* Shared small controls */
.tool { position: relative; width: 16px; height: 16px; flex: none; }
.tool svg { width: 16px; height: 16px; }
.drop { width: 7px; height: 16px; flex: none; }
.drop::before, .arrow {
  content: "";
  display: block;
  width: 7px;
  height: 4px;
  flex: none;
  background: #5a5a5a;
  clip-path: polygon(0 0, 100% 0, 50% 100%);
}
.faded::before { background: #a9a9a9; }

/* Title bar */
.titlebar {
  display: grid;
  grid-template-columns: 1fr auto 1fr;
  align-items: center;
  height: 32px;
  flex: none;
}
.quick { display: flex; align-items: center; gap: 8px; padding: 0 0 4px 12px; }
.quick .drop { margin-left: -1px; }
.rule { width: 1px; height: 24px; margin: 0 -2px 0 4px; background: #b0b0b0; }
.rule.snug { margin: 0 0 0 -4px; }
.quick .lined { width: 9px; border-top: 2px solid #555; height: 8px; padding-top: 2px; margin: 0; }
.title { font-size: 13px; color: #222; padding-bottom: 4px; }
.window-buttons { display: flex; justify-content: flex-end; gap: 15px; padding: 0 10px 4px 0; }
.window-buttons svg { width: 12px; height: 12px; }

/* Ribbon tabs */
.tabs {
  display: flex;
  gap: 1px;
  height: 26px;
  flex: none;
  padding-top: 1px;
  border-bottom: 1px solid #c4c4c4;
  background: #e2e2e2;
}
.tab {
  padding: 0 20px;
  font-size: 15px;
  line-height: 22px;
  background: #cbcfd3;
}
.tab.file { padding: 0 25px; margin: -1px -1px -1px 0; background: #6a6a6a; color: #fff; }
.tab.active {
  margin: -1px 0;
  background: #f8f8f8;
  border-top: 1px solid #999;
  color: #222;
}
.help { display: flex; align-items: center; gap: 7px; margin-left: auto; padding: 0 4px 8px 0; }

/* Ribbon */
.ribbon {
  display: flex;
  flex: none;
  background: #f8f8f8;
  border-bottom: 1px solid #a0a0a0;
  box-shadow: inset 0 -26px #eceef0;
  padding-top: 1px;
}
.group { display: flex; flex-direction: column; border-right: 1px solid #b4b6b8; }
.body { display: flex; height: 86px; }
.lead { padding-left: 7px; }
.big {
  display: flex;
  flex-direction: column;
  align-items: center;
  width: 47px;
  padding-top: 5px;
}
.big.wide { width: 63px; }
.big.widest { width: 69px; }
.big svg { width: 32px; height: 32px; margin-bottom: 8px; }
.big .arrow { margin-top: 5px; }
.col { display: grid; grid-template-rows: repeat(3, 28px); }
.c-first { width: 65px; }
.c-data { width: 99px; }
.c-datum { width: 56px; }
.c-shape { width: 75px; }
.c-eng { width: 78px; }
.c-edit { width: 52px; }
.c-last { width: 63px; }
.cmd { display: flex; align-items: center; gap: 4px; text-align: left; }
.cmd svg { width: 16px; height: 16px; }
.cmd .arrow { margin-left: 3px; }
.cmd:disabled { color: #b0b0b0; }
.cmd:disabled .arrow { background: #a9a9a9; }
.caption { display: flex; align-items: center; justify-content: center; gap: 2px; height: 25px; }
.caption .arrow { width: 8px; height: 5px; }

/* Workspace */
.workspace { display: flex; flex: 1; min-height: 0; border-top: 1px solid #999; }
.panel { display: flex; flex: none; width: 276px; background: #eeeff1; }
.navigator { display: flex; flex-direction: column; flex: 1; min-width: 0; }
.sash { width: 3px; background: #c8c9cb; border-right: 1px solid #999; }
.nav-tabs { display: flex; height: 29px; background: #cbccce; }
.nav-tab {
  display: flex;
  align-items: center;
  gap: 4px;
  padding: 0 8px 0 7px;
  background: #d8dbdc;
  color: #777;
  border: solid #a0a0a0;
  border-width: 1px 1px 1px 0;
}
.nav-tab svg { width: 20px; height: 20px; }
.nav-tab.current { background: #eeeff1; color: #444; border-width: 0 1px 0 0; }
.tree-tools { display: flex; align-items: center; gap: 7px; height: 28px; padding: 0 9px 0 28px; }
.tree-tools h2 { flex: 1; font-size: 12px; text-shadow: 0 0 1px #888; }
.tree-tools .tool:last-child { margin-left: 6px; }
.tool.tall { width: 20px; height: 20px; }
.tool.tall svg { width: 20px; height: 20px; }
.filter { display: flex; align-items: center; gap: 6px; height: 29px; padding: 0 9px 0 12px; }
.funnel { width: 16px; height: 16px; margin-right: -2px; }
.filter .drop { height: 17px; margin-right: 4px; }
.field {
  display: flex;
  align-items: center;
  flex: 1;
  min-width: 0;
  height: 29px;
  padding-right: 1px;
  background: #fdfdfd;
  border: 1px solid #c2c6ca;
}
.field input { flex: 1; min-width: 0; border: 0; background: none; padding: 0 4px; outline: 0; }
.tree {
  flex: 1;
  margin: 4px 5px 5px 8px;
  background: #fdfdfd;
  border-top: 1px solid #ccc;
  list-style: none;
  line-height: 24px;
}
.tree ul { list-style: none; margin-left: 15px; }
.tree svg { float: left; width: 16px; height: 16px; margin: 4px 5px 4px 0; }
.tree > li { padding-left: 3px; }
.tree > li > svg { height: 14px; margin-top: 5px; }
.tree ul li { padding-left: 5px; clear: left; }

.canvas { position: relative; flex: 1; min-width: 0; background: #e8e9ed; }
.model { width: 100%; height: 100%; }
.view-tools {
  position: absolute;
  top: 5px;
  left: 0;
  right: 0;
  display: flex;
  align-items: center;
  justify-content: space-between;
  width: 323px;
  height: 32px;
  margin: auto;
  padding: 0 4px;
  background: #f8f8f8;
  border: 1px solid #a0a0a0;
}
.view-tools .tool { display: grid; place-items: center; width: 22px; height: 23px; }
.view-tools .more::after {
  content: "";
  position: absolute;
  right: 0;
  bottom: 1px;
  border: 2px solid;
  border-color: transparent #444 #444 transparent;
}
.tool.pressed { background: #e0e2e4; border: 1px solid #b0b0b0; }
.view-tools .pressed { width: 23px; }
.view-tools .pressed svg { width: 18px; height: 18px; }

/* Status bar */
.status {
  position: relative;
  display: flex;
  align-items: center;
  height: 38px;
  flex: none;
  padding: 5px 18px 0 6px;
  background: #eeeff1;
  border-top: 2px solid #999;
  box-shadow: inset 0 2px #e2e3e4;
}
.status > .pressed { display: grid; place-items: center; width: 22px; height: 22px; margin-right: 7px; }
.status > .tool + .tool { width: 18px; height: 18px; margin-right: 8px; }
.status > .tool > svg { width: 18px; height: 18px; }
.status > .tool.blank { width: 16px; height: 16px; margin-right: 12px; background: linear-gradient(#fff, #c9dae3); border: 1px solid #1a648a; }
.message {
  flex: 1;
  height: 22px;
  padding-left: 16px;
  border-left: 1px solid #b0b0b0;
  font-size: 11px;
  line-height: 12px;
  background: radial-gradient(circle at 9px 5px, #1a648a 2px, transparent 3px);
}
.cell { width: 42px; height: 30px; border: solid #b0b0b0; border-width: 0 1px; }
.find {
  display: flex;
  align-items: center;
  width: 47px;
  height: 30px;
  padding: 3px;
  border-right: 1px solid #b0b0b0;
}
.find .tool, .find .drop { display: grid; place-items: center; height: 24px; background: #fbfbfb; border: 1px solid #c2c6ca; }
.find .tool { width: 28px; }
.find .drop { width: 15px; margin-left: -1px; }
.picker { position: relative; display: flex; width: 178px; height: 25px; margin-left: 97px; background: #fbfbfb; border: 1px solid #b4b8ba; }
.picker select { flex: 1; appearance: none; border: 0; background: none; padding: 0 7px; }
.picker::after {
  content: "";
  width: 7px;
  height: 4px;
  margin: 10px 4px;
  background: #777;
  clip-path: polygon(0 0, 100% 0, 50% 100%);
}
.picker::before { content: ""; position: absolute; right: 15px; top: 0; bottom: 0; border-left: 1px solid #b4b8ba; }

.watermark {
  position: absolute;
  right: 5px;
  bottom: -3px;
  z-index: 1;
  width: 206px;
  height: 62px;
  background: rgba(246, 248, 247, .35);
  pointer-events: none;
  white-space: nowrap;
}
.watermark svg { position: absolute; left: 1px; top: 2px; width: 60px; height: 58px; opacity: .7; }
.mark-name { margin-left: 70px; font: 900 29px/38px "Noto Sans CJK SC", sans-serif; color: #94cfac; }
.mark-url { margin-left: 58px; font: 15px/20px "Noto Sans", sans-serif; color: #b9ddd6; }

/* Desktop taskbar */
.taskbar {
  display: flex;
  gap: 10px;
  height: 8px;
  flex: none;
  overflow: hidden;
  border-top: 1px solid #111;
  box-shadow: inset 0 1px #9aa0bd;
  background: linear-gradient(90deg, #33456b 0, #47608c 16%, #7a87bd 17%, #9297cd 19%, #4b5170 22%, #2c2f40 24%, #4d5372 27%, #2b2d3c 33%, #666d98 38%, #37394c 44%, #5e658e 51%, #2f3348 57%, #50587c 64%, #3b3f56 70%, #7078a8 76%, #8590c4 79%, #626890 86%, #20222f 92%, #3c4364 100%);
}
.start { flex: none; width: 28px; height: 20px; margin: 1px 12px 0 13px; border-radius: 14px; background: #a9c5d8; border: 1px solid #dcecf5; }
.task { flex: none; width: 51px; height: 12px; margin-left: -3px; padding: 4px 15px; border: 1px solid #c5cbdc; border-radius: 3px; background: linear-gradient(90deg, #b9bdc9, #7d8cab); }
.task.shifted { margin-left: 2px; }
.task.light { width: 58px; padding: 2px 12px; margin-left: -1px; background: #dfe3ee; }
.task.pale { width: 58px; padding: 2px 12px; margin-left: -6px; background: linear-gradient(90deg, #dcdff0, #a9addb); }
.task b { display: block; height: 10px; }
.gold { width: 10px; background: #d9b25a; }
.green { width: 18px; border-radius: 8px; background: #7cc04f; }
.white { background: #fff; border: 1px solid #666; }
.red { background: linear-gradient(90deg, #e2646e, #fff); }
```
